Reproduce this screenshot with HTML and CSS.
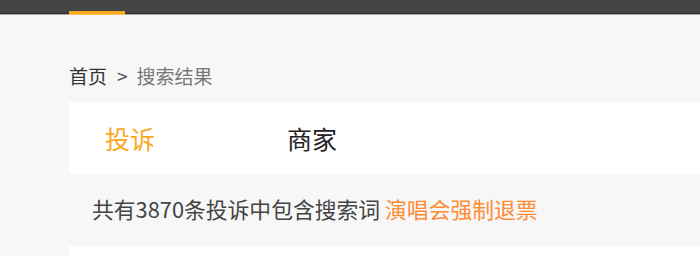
FILE: index.html
```html
<!DOCTYPE html>
<html lang="zh-CN">
<head>
    <meta charset="UTF-8">
    <meta name="viewport" content="width=device-width, initial-scale=1.0">
    <title>搜索结果</title>
    <link rel="stylesheet" href="styles.css">
</head>
<body>
    <div class="header">
        <div class="nav-active"></div>
    </div>

    <div class="main">
        <div class="crumb">
            <span class="crumb-home">首页</span>
            <span class="crumb-sep">&gt;</span>
            <span class="crumb-current">搜索结果</span>
        </div>

        <div class="tabs">
            <div class="tab tab-active">投诉</div>
            <div class="tab">商家</div>
        </div>

        <div class="count">
            共有3870条投诉中包含搜索词 <span class="keyword">演唱会强制退票</span>
        </div>

        <div class="list"></div>
    </div>
</body>
</html>
```

FILE: styles.css
```css
body{
    margin: 0;
    background-color: #f7f7f7;
    font-family: "Noto Sans CJK SC", "Noto Sans", sans-serif;
}
.header{
    height: 15px;
    display: flex;
    background: linear-gradient(#454545 0, #454545 13px, #303030 13px, #303030 14px, #a8a8a8 14px);
}
.nav-active{
    width: 56px;
    height: 4px;
    margin-left: 69px;
    margin-top: 11px;
    background: linear-gradient(#f9a71b 0, #f9a71b 3px, #fbc25a 3px);
}
.main{
    padding-left: 69px;
}
.crumb{
    margin-top: 49px;
    height: 24px;
    line-height: 24px;
    font-size: 19px;
    display: flex;
}
.crumb-home{
    color: #333;
}
.crumb-sep{
    color: #555;
    margin: 0 9px 0 10px;
}
.crumb-current{
    color: #777;
}
.tabs{
    margin-top: 14px;
    height: 72px;
    background-color: white;
    display: flex;
    align-items: center;
}
.tab{
    font-size: 25px;
    color: #222;
}
.tab-active{
    color: #fba71c;
    margin-left: 36px;
    margin-right: 132px;
}
.count{
    height: 72px;
    line-height: 70px;
    padding-left: 23px;
    font-size: 21.8px;
    color: #444;
}
.keyword{
    color: #ff8b36;
}
.list{
    height: 40px;
    background-color: white;
}
```
